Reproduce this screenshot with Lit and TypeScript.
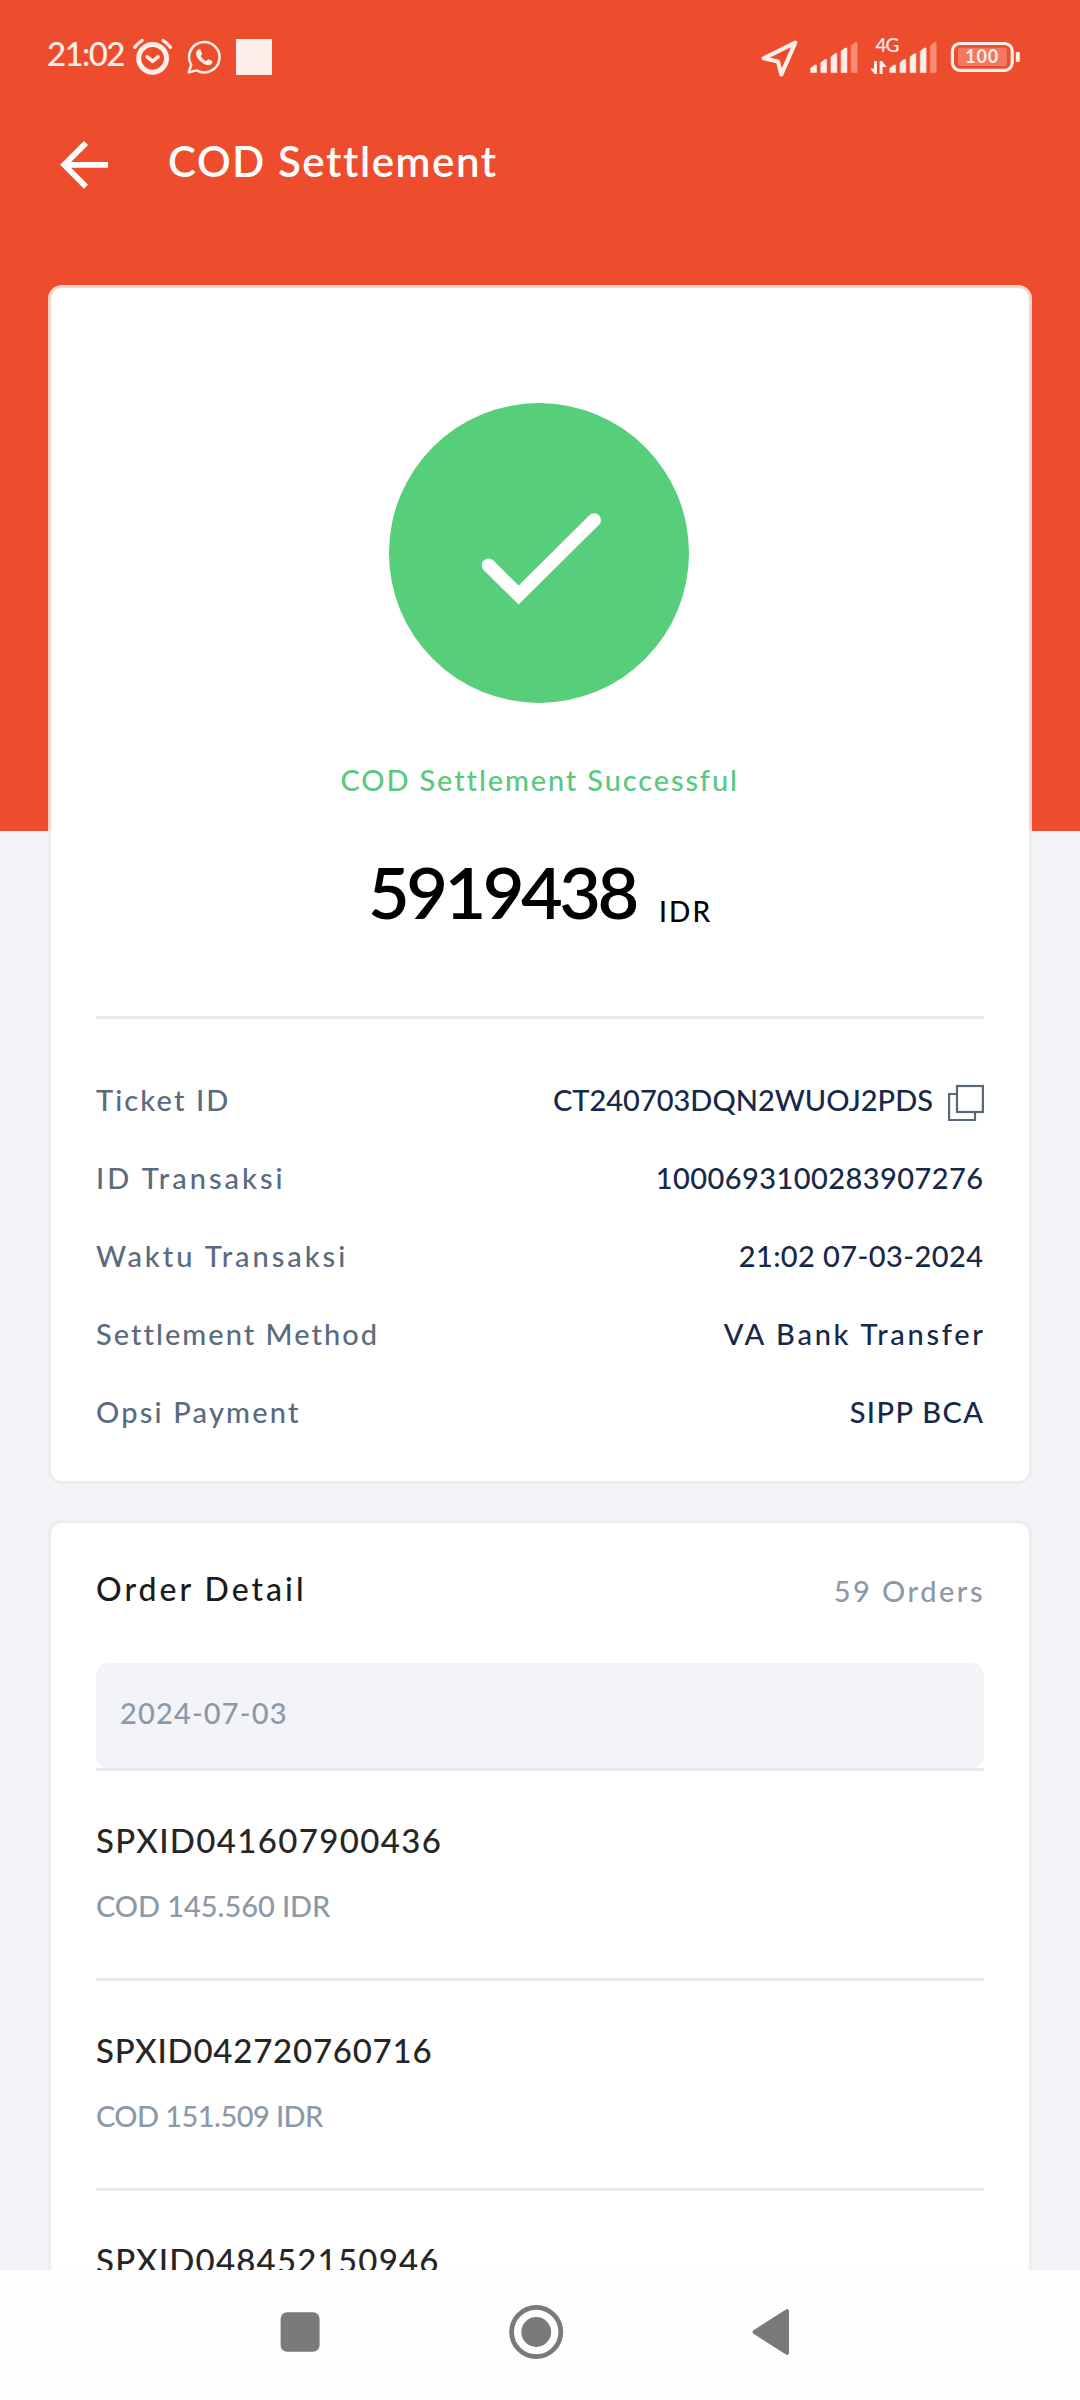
import { LitElement, html, css, svg, nothing } from "lit";
import { customElement } from "lit/decorators.js";
import { styleMap } from "lit/directives/style-map.js";

/** A string with the letter tracking (px) it is set in. */
interface Label {
  text: string;
  tracking: number;
}

interface DetailRow {
  label: Label;
  value: Label;
  copyable?: boolean;
}

interface Order {
  id: Label;
  amount: Label;
}

const DETAILS: DetailRow[] = [
  {
    label: { text: "Ticket ID", tracking: 2.1 },
    value: { text: "CT240703DQN2WUOJ2PDS", tracking: 0 },
    copyable: true,
  },
  {
    label: { text: "ID Transaksi", tracking: 3 },
    value: { text: "1000693100283907276", tracking: 0.42 },
  },
  {
    label: { text: "Waktu Transaksi", tracking: 2.95 },
    value: { text: "21:02 07-03-2024", tracking: 0.42 },
  },
  {
    label: { text: "Settlement Method", tracking: 2.02 },
    value: { text: "VA Bank Transfer", tracking: 2.72 },
  },
  {
    label: { text: "Opsi Payment", tracking: 2.2 },
    value: { text: "SIPP BCA", tracking: 1.4 },
  },
];

const ORDERS: Order[] = [
  {
    id: { text: "SPXID041607900436", tracking: 1.35 },
    amount: { text: "COD 145.560 IDR", tracking: -0.06 },
  },
  {
    id: { text: "SPXID042720760716", tracking: 0.77 },
    amount: { text: "COD 151.509 IDR", tracking: -0.56 },
  },
  {
    id: { text: "SPXID048452150946", tracking: 1.2 },
    amount: { text: "", tracking: 0 },
  },
];

const tracked = (l: Label, cls: string) =>
  html`<span class="tracked ${cls}" style=${styleMap({ "--ls": `${l.tracking}px` })}>${l.text}</span>`;

/** Five slanted signal bars, the last one dimmed. */
const signalBars = (x: number) =>
  [0, 1, 2, 3, 4].map((i) => {
    const left = x + i * 10.15;
    const top = [65, 59.5, 53.7, 48, 42.5][i];
    return svg`<path
      d="M${left} 72.6V${top + 3.2}L${left + 4} ${top}H${left + 5.8}V72.6Z"
      stroke-width="0.6" stroke-linejoin="round"
      fill=${i === 4 ? "#f78d76" : "#fdeeea"} stroke=${i === 4 ? "#f78d76" : "#fdeeea"} />`;
  });

@customElement("status-bar")
export class StatusBar extends LitElement {
  static styles = css`
    :host {
      display: flex;
      align-items: flex-start;
      justify-content: space-between;
      padding: 30px 58px 0 47px;
      color: #fdeeea;
    }
    .group {
      display: flex;
      align-items: flex-start;
    }
    .time {
      width: 85px;
      margin-top: 6px;
      font-size: 33px;
      line-height: 34px;
      letter-spacing: -1.6px;
      white-space: nowrap;
    }
    svg {
      display: block;
      flex: none;
    }
    .whatsapp {
      margin-left: 12px;
    }
    .block {
      width: 36px;
      height: 36px;
      margin: 9px 0 0 14px;
      background: #fdeeea;
    }
    .sim1 {
      margin-left: 9px;
    }
    .sim2 {
      margin-left: 8px;
    }
    .battery {
      margin-left: 11px;
    }
    text {
      font-family: Lato, "Open Sans", sans-serif;
      fill: #fdeeea;
    }
    .net {
      font-size: 19px;
      font-weight: 500;
      letter-spacing: -0.8px;
    }
    .level {
      font-size: 18px;
      font-weight: 700;
      letter-spacing: 0.9px;
    }
  `;

  render() {
    return html`
      <div class="group">
        <span class="time">21:02</span>
        <svg width="42" height="48" viewBox="132 30 42 48" fill="none" stroke="#fdeeea" stroke-linecap="round">
          <circle cx="152.6" cy="58.3" r="13.9" stroke-width="5" />
          <path d="M147.2 56.8L152.6 61.3L158 56.8" stroke-width="3.6" stroke-linejoin="round" />
          <path d="M134.8 47.3Q137.5 43.3 142 40.6M170.4 47.3Q167.7 43.3 163.2 40.6" stroke-width="3.4" />
        </svg>
        <svg class="whatsapp" width="36" height="48" viewBox="186 30 36 48">
          <path
            d="M188.8 72.4L191.2 64.9A15.2 15.2 0 1 1 196.8 70.4Z"
            fill="none" stroke="#fdeeea" stroke-width="2.5" stroke-linejoin="round" />
          <path
            d="M197.2 50.4C198.6 48.8 200.3 49.2 200.9 50.7L202 53.4C202.3 54.4 201.2 55.2 200.6 56.1C202.1 58.8 204.1 60.3 206.4 61.1C207.3 60.3 208 59 209 59.4L211.8 60.8C212.9 61.5 212.4 63.2 211.2 64.2C207.6 66.8 202.7 63.6 199.6 60.4C196.2 56.7 194.8 53 197.2 50.4Z"
            fill="#fdeeea" />
        </svg>
        <span class="block"></span>
      </div>
      <div class="group">
        <svg width="38" height="48" viewBox="761 30 38 48">
          <path
            d="M795.3 42.6L763.6 58.3L778 61.4L781.3 74.6Z"
            fill="none" stroke="#fdeeea" stroke-width="4.1" stroke-linejoin="round" />
        </svg>
        <svg class="sim1" width="52" height="48" viewBox="808 30 52 48">${signalBars(810.7)}</svg>
        <svg class="sim2" width="70" height="48" viewBox="868 30 70 48">
          <text class="net" x="875.4" y="52">4G</text>
          <path d="M874 61H877V74H874.6L870 68.4H874ZM879.6 74V61H882.2L886.6 67H882.6V74Z" fill="#fdeeea" />
          ${signalBars(889.8)}
        </svg>
        <svg class="battery" width="73" height="48" viewBox="949 30 73 48">
          <rect x="952.4" y="43.5" width="59.8" height="26.8" rx="7.5" fill="none" stroke="#fdeeea" stroke-width="3.2" />
          <rect x="958" y="47.8" width="49" height="18.2" rx="2" fill="#f3785f" />
          <rect x="1015.8" y="52" width="4" height="10" rx="1.2" fill="#fdeeea" />
          <text class="level" x="965.2" y="62.8">100</text>
        </svg>
      </div>
    `;
  }
}

@customElement("nav-bar")
export class NavBar extends LitElement {
  static styles = css`
    :host {
      display: flex;
      align-items: center;
      height: 130px;
      padding: 0 0 6px 280px;
      box-sizing: border-box;
      background: #fefefe;
    }
    svg {
      display: block;
    }
    .home {
      margin-left: 188px;
    }
    .back {
      margin-left: 188px;
    }
  `;

  render() {
    return html`
      <svg width="40" height="40" viewBox="0 0 40 40">
        <rect x="0.6" y="0.3" width="39" height="39.4" rx="6.5" fill="#7a7a7a" />
      </svg>
      <svg class="home" width="56" height="56" viewBox="0 0 56 56">
        <circle cx="28.2" cy="28" r="24.6" fill="none" stroke="#7a7a7a" stroke-width="4.8" />
        <circle cx="28.2" cy="28" r="14.9" fill="#7a7a7a" />
      </svg>
      <svg class="back" width="38" height="48" viewBox="0 0 38 48">
        <path d="M2.6 24L35 3.1V44.9Z" fill="#7a7a7a" stroke="#7a7a7a" stroke-width="4" stroke-linejoin="round" />
      </svg>
    `;
  }
}

@customElement("app-root")
export class AppRoot extends LitElement {
  static styles = css`
    :host {
      display: block;
      width: 1080px;
      height: 2400px;
      overflow: hidden;
      font-family: Lato, "Open Sans", sans-serif;
      font-weight: 500;
      font-size: 29px;
      line-height: 40px;
      white-space: nowrap;
      font-kerning: normal;
      font-variant-ligatures: none;
    }
    .screen {
      height: 2270px;
      overflow: hidden;
      background: linear-gradient(#ee4d2d 831px, #f2f4f8 831px);
    }
    .appbar {
      display: flex;
      align-items: flex-start;
      gap: 58px;
      height: 52px;
      padding: 61px 0 0 58px;
      color: #fff;
    }
    .title {
      margin-top: 1px;
      font-size: 42px;
      line-height: 43px;
      font-weight: 600;
      letter-spacing: 1.6px;
    }
    svg {
      display: block;
      flex: none;
    }
    .card {
      box-sizing: border-box;
      width: 984px;
      margin: 0 48px;
      border: 3px solid #ededee;
      border-radius: 14px;
      background: #fff;
    }
    /* The frame fades into the header colour while it lies on it. */
    .receipt {
      margin-top: 94px;
      padding: 115px 45px 49px;
      border-color: transparent;
      background:
        linear-gradient(#fff, #fff) padding-box,
        linear-gradient(#fad3ca 546px, #ededee 546px) border-box;
    }
    .badge {
      margin: 0 auto;
      position: relative;
      left: -1px;
    }
    .status {
      margin-top: 57px;
      padding-left: 244.5px;
      color: #5bc97d;
      letter-spacing: 1.86px;
    }
    .total {
      display: flex;
      align-items: flex-end;
      margin-top: 51px;
      padding-left: 272px;
      color: #000;
    }
    .sum {
      width: 291px;
      font-size: 72px;
      line-height: 80px;
      font-weight: 600;
      letter-spacing: -3.5px;
    }
    .currency {
      font-size: 28px;
      letter-spacing: 2.1px;
    }
    .rule {
      height: 3px;
      background: #e7ebf1;
    }
    .receipt .rule {
      margin-top: 85px;
    }
    .details {
      display: flex;
      flex-direction: column;
      gap: 38px;
      margin-top: 61px;
    }
    .row {
      display: flex;
      justify-content: space-between;
      height: 40px;
    }
    .tracked {
      letter-spacing: var(--ls);
    }
    .label {
      color: #5b6b7f;
    }
    .value {
      margin-right: calc(1px - var(--ls));
      color: #16294a;
    }
    .pair {
      display: flex;
      gap: 14px;
    }
    .copy {
      margin-top: 4px;
    }
    .orders {
      margin-top: 36px;
      height: 900px;
      padding: 46px 45px 0;
    }
    .heading {
      display: flex;
      justify-content: space-between;
      align-items: flex-start;
    }
    .name {
      font-size: 32px;
      letter-spacing: 3px;
      color: #1b1b1b;
    }
    .count {
      margin: 2px -1px 0 0;
      letter-spacing: 2.5px;
      color: #8c99a8;
    }
    .date {
      box-sizing: border-box;
      height: 105px;
      margin-top: 52px;
      padding: 30px 24px;
      border-radius: 12px;
      background: #f2f4f8;
      letter-spacing: 1.15px;
      color: #8c99a8;
    }
    .order {
      display: flex;
      flex-direction: column;
      gap: 26px;
      box-sizing: border-box;
      height: 207px;
      padding-top: 49px;
    }
    .order-id {
      font-size: 33px;
      color: #262626;
    }
    .order-amount {
      color: #8c99a8;
    }
  `;

  private renderDetail(row: DetailRow) {
    return html`
      <div class="row">
        ${tracked(row.label, "label")}
        <div class="pair">
          ${tracked(row.value, "value")}
          ${row.copyable
            ? html`<svg class="copy" width="36" height="38" viewBox="0 0 36 38" fill="none" stroke="#566779" stroke-width="2.2">
                <path d="M9 10H1.1V36H27V29" />
                <rect x="9" y="2" width="25.9" height="26" />
              </svg>`
            : nothing}
        </div>
      </div>
    `;
  }

  private renderOrder(order: Order) {
    return html`
      <div class="rule"></div>
      <div class="order">
        ${tracked(order.id, "order-id")}
        ${order.amount.text ? tracked(order.amount, "order-amount") : nothing}
      </div>
    `;
  }

  render() {
    return html`
      <div class="screen">
        <status-bar></status-bar>
        <div class="appbar">
          <svg width="52" height="52" viewBox="58 139 52 52" fill="none" stroke="#fff" stroke-width="5.8">
            <path d="M108 164.8H64M86 143L64.2 164.8L86 186.8" />
          </svg>
          <span class="title">COD Settlement</span>
        </div>

        <section class="card receipt">
          <svg class="badge" width="300" height="300" viewBox="389 403 300 300">
            <circle cx="539" cy="553" r="150" fill="#57ce7a" />
            <path
              d="M488.6 565.3L518.6 595L594.2 520"
              fill="none" stroke="#fff" stroke-width="13.6" stroke-linecap="round" />
          </svg>
          <div class="status">COD Settlement Successful</div>
          <div class="total">
            <span class="sum">5919438</span>
            <span class="currency">IDR</span>
          </div>
          <div class="rule"></div>
          <div class="details">${DETAILS.map((row) => this.renderDetail(row))}</div>
        </section>

        <section class="card orders">
          <div class="heading">
            <span class="name">Order Detail</span>
            <span class="count">59 Orders</span>
          </div>
          <div class="date">2024-07-03</div>
          ${ORDERS.map((order) => this.renderOrder(order))}
        </section>
      </div>
      <nav-bar></nav-bar>
    `;
  }
}
